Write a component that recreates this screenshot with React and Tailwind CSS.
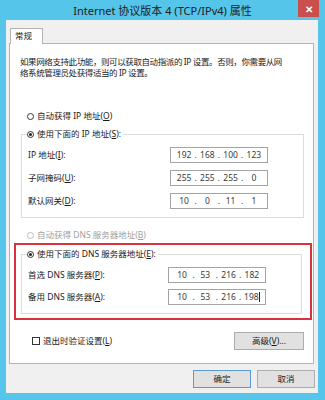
import React from "react";

const Key = ({ children }) => <span className="underline">{children}</span>;

const Radio = ({ checked, disabled }) => (
  <span
    className={`inline-flex items-center justify-center w-[7px] h-[7px] rounded-full border bg-white shrink-0 ${
      disabled ? "border-[#bcbcbc]" : "border-[#333]"
    }`}
  >
    {checked && <span className="w-[3px] h-[3px] rounded-full bg-[#222]" />}
  </span>
);

const IpBox = ({ parts, caret }) => (
  <div className="w-[98px] h-[16px] border border-[#a3a3a3] bg-white flex items-center text-[8.5px] text-[#3a3a3a] px-[3px]">
    {parts.map((p, i) => (
      <React.Fragment key={i}>
        {i > 0 && <span className="w-[3px] text-center">.</span>}
        <span className="flex-1 flex items-center justify-center">
          {p}
          {caret && i === 3 && <span className="w-[1px] h-[10px] bg-[#222]" />}
        </span>
      </React.Fragment>
    ))}
  </div>
);

const FieldRow = ({ label, parts, caret, className = "" }) => (
  <div className={`flex items-center ${className}`}>
    <span className="ml-[6px]">{label}</span>
    <div className="ml-auto mr-[35px]">
      <IpBox parts={parts} caret={caret} />
    </div>
  </div>
);

const Legend = ({ children }) => (
  <div className="-mt-[7px] ml-[5px] h-[12px] flex items-center gap-[3px] bg-white w-fit pr-[2px]">
    <Radio checked />
    <span>{children}</span>
  </div>
);

const Button = ({ children, primary, className = "" }) => (
  <div
    className={`h-[18px] flex items-center justify-center bg-[#e1e1e1] border ${
      primary ? "border-[#5b9bd5]" : "border-[#adadad]"
    } ${className}`}
  >
    {children}
  </div>
);

export default function App() {
  return (
    <div className="w-[325px] h-[400px] bg-[#55c5ea] flex flex-col text-[8.5px] text-[#1a1a1a] font-['Segoe_UI','Noto_Sans','Noto_Sans_CJK_SC',sans-serif] leading-none">
      {/* 标题栏 */}
      <div className="h-[20px] flex items-start">
        <div className="flex-1 h-[20px] flex items-center justify-center pl-[27px] text-[11px] text-[#202020]">
          Internet 协议版本 4 (TCP/IPv4) 属性
        </div>
        <div className="w-[21px] h-[17px] mr-[6px] bg-[#c9504c] flex items-center justify-center text-white text-[10px] font-bold">
          ✕
        </div>
      </div>

      {/* 窗口内容 */}
      <div className="flex-1 ml-[6px] mr-[7px] mb-[7px] bg-[#f0f0f0] flex flex-col">
        <div className="pt-[8px] pl-[4px]">
          <div className="w-[33px] h-[16px] bg-white border border-b-0 border-[#b4b4b4] relative z-10 -mb-[1px] flex items-center pl-[4px]">
            常规
          </div>
        </div>

        <div className="ml-[3px] mr-[4px] h-[321px] border border-[#b4b4b4] bg-white flex flex-col">
          <p className="mt-[12px] px-[10px] leading-[11px] tracking-[-0.4px]">
            如果网络支持此功能，则可以获取自动指派的 IP 设置。否则，你需要从网
            <br />
            络系统管理员处获得适当的 IP 设置。
          </p>

          <div className="mt-[32px] ml-[17px] h-[12px] flex items-center gap-[3px]">
            <Radio />
            <span>
              自动获得 IP 地址(<Key>O</Key>)
            </span>
          </div>

          <div className="mt-[12px] ml-[11px] mr-[9px] border border-[#dcdcdc] pb-[8px]">
            <Legend>
              使用下面的 IP 地址(<Key>S</Key>):
            </Legend>
            <FieldRow
              className="mt-[7px]"
              label={<>IP 地址(<Key>I</Key>):</>}
              parts={["192", "168", "100", "123"]}
            />
            <FieldRow
              className="mt-[7px]"
              label={<>子网掩码(<Key>U</Key>):</>}
              parts={["255", "255", "255", "0"]}
            />
            <FieldRow
              className="mt-[7px]"
              label={<>默认网关(<Key>D</Key>):</>}
              parts={["10", "0", "11", "1"]}
            />
          </div>

          <div className="mt-[11px] ml-[17px] h-[12px] flex items-center gap-[3px] text-[#a0a0a0]">
            <Radio disabled />
            <span>
              自动获得 DNS 服务器地址(<Key>B</Key>)
            </span>
          </div>

          {/* 红框标注 */}
          <div className="mt-[2px] ml-[4px] mr-[1px] border-2 border-[#d8323c] pb-[4px]">
            <div className="mt-[9px] ml-[5px] mr-[8px] border border-[#dcdcdc] pb-[8px]">
              <Legend>
                使用下面的 DNS 服务器地址(<Key>E</Key>):
              </Legend>
              <FieldRow
                className="mt-[7px]"
                label={<>首选 DNS 服务器(<Key>P</Key>):</>}
                parts={["10", "53", "216", "182"]}
              />
              <FieldRow
                className="mt-[6px]"
                label={<>备用 DNS 服务器(<Key>A</Key>):</>}
                parts={["10", "53", "216", "198"]}
                caret
              />
            </div>
          </div>

          <div className="mt-[12px] flex items-center">
            <span className="ml-[22px] w-[8px] h-[8px] border border-[#333] bg-white" />
            <span className="ml-[3px]">
              退出时验证设置(<Key>L</Key>)
            </span>
            <Button className="ml-auto mr-[9px] w-[70px]">
              高级(<Key>V</Key>)...
            </Button>
          </div>
        </div>

        <div className="mt-[6px] flex justify-end gap-[6px] pr-[3px]">
          <Button primary className="w-[58px]">
            确定
          </Button>
          <Button className="w-[58px]">取消</Button>
        </div>
      </div>
    </div>
  );
}
